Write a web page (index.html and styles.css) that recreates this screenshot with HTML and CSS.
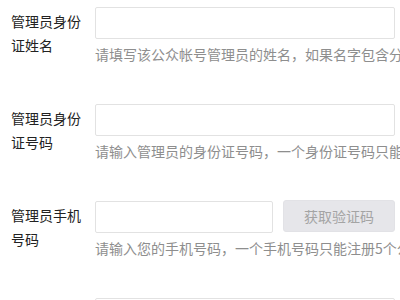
FILE: index.html
```html
<!DOCTYPE html>
<html lang="zh-CN">
<head>
    <meta charset="UTF-8">
    <meta name="viewport" content="width=device-width, initial-scale=1.0">
    <title>管理员信息登记</title>
    <link rel="stylesheet" href="styles.css">
</head>
<body>
    <form class="form">
        <div class="row">
            <label class="label" for="name">管理员身份证姓名</label>
            <div class="field">
                <input class="input" id="name" type="text">
                <p class="tip">请填写该公众帐号管理员的姓名，如果名字包含分隔号“·”，请勿省略。</p>
            </div>
        </div>

        <div class="row">
            <label class="label" for="idcard">管理员身份证号码</label>
            <div class="field">
                <input class="input" id="idcard" type="text">
                <p class="tip">请输入管理员的身份证号码，一个身份证号码只能注册5个公众帐号。</p>
            </div>
        </div>

        <div class="row">
            <label class="label" for="mobile">管理员手机号码</label>
            <div class="field">
                <div class="inline">
                    <input class="input short" id="mobile" type="text">
                    <button class="btn" type="button" disabled>获取验证码</button>
                </div>
                <p class="tip">请输入您的手机号码，一个手机号码只能注册5个公众帐号。</p>
            </div>
        </div>

        <div class="row">
            <label class="label" for="code">短信验证码</label>
            <div class="field">
                <input class="input" id="code" type="text">
            </div>
        </div>
    </form>
</body>
</html>
```

FILE: styles.css
```css
html, body {
    margin: 0;
    height: 100%;
    overflow: hidden;
}

body {
    font-family: "Noto Sans CJK SC", "Liberation Sans", sans-serif;
    font-size: 14px;
    color: #222;
    background-color: #fff;
}

.form {
    padding: 7px 0 0 11px;
}

.row {
    display: flex;
    margin-bottom: 40px;
}

.label {
    width: 72px;
    margin-right: 12px;
    padding-top: 2px;
    line-height: 24px;
    flex-shrink: 0;
}

.field {
    flex-shrink: 0;
}

.input {
    display: block;
    box-sizing: border-box;
    width: 300px;
    height: 32px;
    margin: 0;
    border: 1px solid #e2e2e2;
    border-radius: 2px;
    background-color: #fff;
}

.inline {
    display: flex;
    gap: 10px;
}

.input.short {
    width: 178px;
}

.btn {
    box-sizing: border-box;
    width: 112px;
    height: 32px;
    margin-top: -1px;
    border: 1px solid #e2e2e6;
    border-radius: 3px;
    background-color: #e6e6ea;
    color: #a4a4a4;
    font-family: inherit;
    font-size: 14px;
}

.tip {
    margin: 5px 0 0;
    line-height: 20px;
    color: #8e8e8e;
    white-space: nowrap;
}
```
